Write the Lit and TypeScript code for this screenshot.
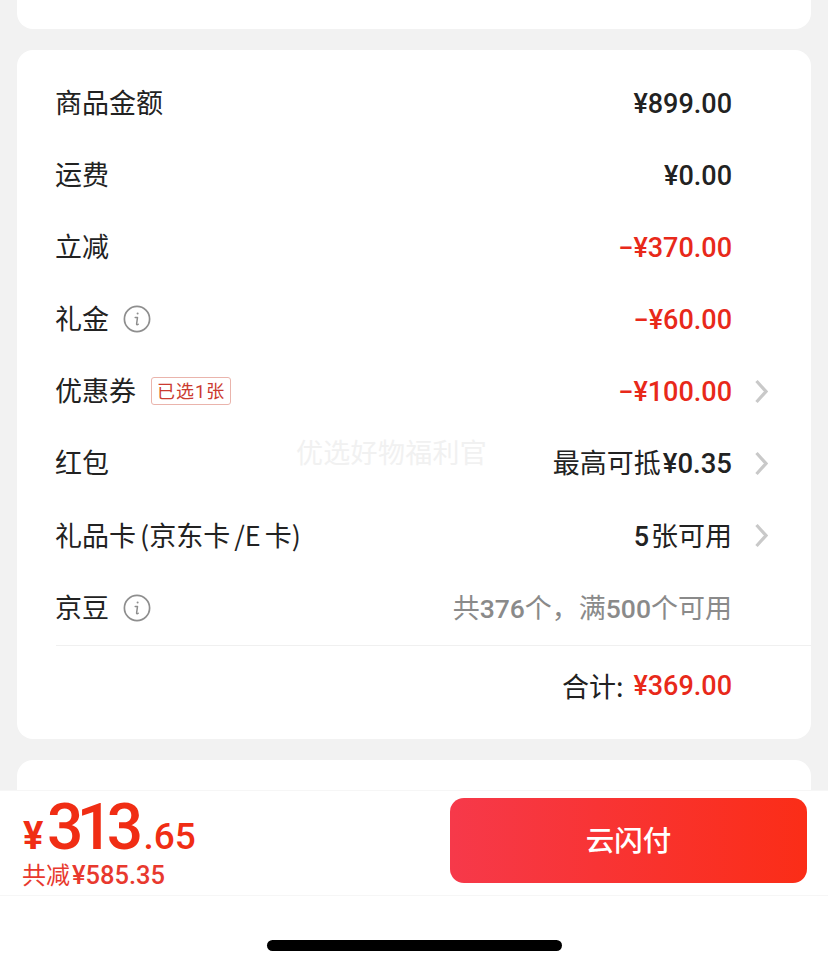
import { LitElement, html, css, nothing } from 'lit';
import { customElement } from 'lit/decorators.js';

type Row = {
  label: string;
  value: string;
  tone?: 'red' | 'gray';
  gap?: 'gap-before' | 'gap-after';
  info?: boolean;
  tag?: string;
  arrow?: boolean;
};

const rows: Row[] = [
  { label: '商品金额', value: '¥899.00' },
  { label: '运费', value: '¥0.00' },
  { label: '立减', value: '−¥370.00', tone: 'red' },
  { label: '礼金', value: '−¥60.00', tone: 'red', info: true },
  { label: '优惠券', value: '−¥100.00', tone: 'red', tag: '已选1张', arrow: true },
  { label: '红包', value: '最高可抵¥0.35', gap: 'gap-before', arrow: true },
  { label: '礼品卡 (京东卡 /E 卡)', value: '5张可用', gap: 'gap-after', arrow: true },
  { label: '京豆', value: '共376个，满500个可用', tone: 'gray', info: true },
];

const infoIcon = html`
  <svg class="info" viewBox="0 0 28 28" fill="none" stroke="#8e8e8e">
    <circle cx="14" cy="14" r="12.6" stroke-width="1.7"></circle>
    <path d="M12.2 12.4h2.3l-.9 6.6c-.1.9.8 1 1.6.2" stroke-width="1.5" stroke-linecap="round" stroke-linejoin="round"></path>
    <circle cx="14.6" cy="8.6" r="1" fill="#8e8e8e" stroke="none"></circle>
  </svg>
`;

const chevron = html`
  <svg class="chevron" viewBox="0 0 13 24" fill="none" stroke="#c9c9c9" stroke-width="3.2">
    <path d="M1.5 1.5 11 12 1.5 22.5" stroke-linejoin="miter"></path>
  </svg>
`;

// digits sit in a heavier latin face than the CJK around them
const mixed = (text: string) =>
  text.split(/([−¥0-9.]+)/).map((part, i) => (i % 2 ? html`<span class="num">${part}</span>` : part));

@customElement('app-root')
export class AppRoot extends LitElement {
  static styles = css`
    :host {
      display: block;
      width: 828px;
      height: 968px;
      overflow: hidden;
      position: relative;
      background: #f2f2f2;
      color: #222;
      font-family: 'Noto Sans CJK SC', sans-serif;
    }

    .num {
      font-family: 'Roboto', 'Noto Sans CJK SC', sans-serif;
      font-weight: 500;
    }

    .scroll {
      display: flex;
      flex-direction: column;
      gap: 21px;
      padding: 0 17px;
      height: 790px;
      overflow: hidden;
      box-sizing: border-box;
    }

    .card {
      background: #fff;
      border-radius: 16px;
      flex-shrink: 0;
    }

    .card.top {
      height: 29px;
      border-radius: 0 0 16px 16px;
    }

    .card.summary {
      height: 689px;
      padding-top: 16.95px;
      box-sizing: border-box;
    }

    .card.next {
      height: 60px;
    }

    .row {
      display: flex;
      align-items: center;
      height: 72.1px;
      padding-left: 38px;
      padding-right: 43px;
    }

    .label {
      font-size: 27px;
      line-height: 36px;
      padding-bottom: 2px;
      word-spacing: -2px;
      white-space: nowrap;
    }

    .info {
      width: 28px;
      height: 28px;
      margin-left: 14px;
    }

    .tag {
      font-size: 18px;
      line-height: 24px;
      letter-spacing: 1px;
      color: #cb3a30;
      border: 1px solid #eab4ac;
      border-radius: 3px;
      padding: 0 5px;
      margin-left: 15px;
      white-space: nowrap;
    }

    .tag .num {
      font-weight: 400;
    }

    .value {
      margin-left: auto;
      font-size: 27px;
      line-height: 36px;
      white-space: nowrap;
    }

    .value.red {
      color: #e8291a;
    }

    .value.gray {
      color: #8a8a8a;
    }

    .value.gray .num {
      font-size: 26.5px;
    }

    .value.gap-before .num {
      font-size: 27.5px;
      margin-left: 2px;
    }

    .value.gap-after .num {
      margin-right: 2px;
    }

    .slot {
      width: 13px;
      height: 27px;
      margin-left: 23px;
      flex-shrink: 0;
    }

    .chevron {
      display: block;
      width: 13px;
      height: 27px;
    }

    .total {
      display: flex;
      justify-content: flex-end;
      align-items: center;
      margin-top: 1px;
      margin-left: 39px;
      height: 80px;
      padding-right: 79px;
      border-top: 1px solid #f0f0f0;
      white-space: nowrap;
    }

    .total .cn {
      font-size: 27px;
      margin-right: 10px;
    }

    .total .num {
      font-size: 27px;
      color: #e8291a;
    }

    .watermark {
      position: absolute;
      left: 296px;
      top: 434px;
      font-size: 27px;
      line-height: 36px;
      letter-spacing: 0.3px;
      color: #f1f1f1;
      white-space: nowrap;
    }

    .footer {
      display: flex;
      align-items: center;
      justify-content: space-between;
      box-sizing: border-box;
      height: 106px;
      padding: 0 21px 4px 23px;
      background: #fff;
      border-top: 1px solid #f6f6f6;
      border-bottom: 1px solid #f6f6f6;
    }

    .now {
      display: flex;
      align-items: baseline;
      box-sizing: border-box;
      height: 68px;
      padding-top: 7px;
      line-height: 58px;
      color: #f02d14;
      font-family: 'Roboto', sans-serif;
      font-weight: 500;
    }

    .now .yen {
      font-size: 38px;
      font-weight: 700;
      margin-right: 3.5px;
    }

    .now .int {
      font-size: 64px;
      letter-spacing: -6.5px;
    }

    .now .dec {
      font-size: 37px;
      margin-left: 7px;
    }

    .saved {
      font-size: 24px;
      line-height: 30px;
      margin-top: -1px;
      margin-left: -1px;
      color: #e8392e;
      white-space: nowrap;
    }

    .saved .num {
      font-size: 25.5px;
      margin-left: 2px;
    }

    .pay {
      width: 357px;
      height: 85px;
      margin-bottom: 2px;
      border: none;
      border-radius: 14px;
      background: linear-gradient(90deg, #f6394a, #fb2d17);
      color: #fff;
      font-family: inherit;
      font-size: 28.5px;
      font-weight: 500;
      padding: 0 0 3px;
    }

    .home {
      display: flex;
      justify-content: center;
      background: #fff;
      height: 72px;
      padding-top: 44px;
      box-sizing: border-box;
    }

    .home span {
      display: block;
      width: 295px;
      height: 11px;
      border-radius: 6px;
      background: #000;
    }
  `;

  private renderRow(row: Row) {
    return html`
      <div class="row">
        <span class="label">${row.label}</span>
        ${row.info ? infoIcon : nothing}
        ${row.tag ? html`<span class="tag">${mixed(row.tag)}</span>` : nothing}
        <span class="value ${row.tone ?? ''} ${row.gap ?? ''}">${mixed(row.value)}</span>
        <span class="slot">${row.arrow ? chevron : nothing}</span>
      </div>
    `;
  }

  render() {
    return html`
      <div class="scroll">
        <div class="card top"></div>
        <div class="card summary">
          ${rows.map((row) => this.renderRow(row))}
          <div class="total">
            <span class="cn">合计:</span>
            <span class="num">¥369.00</span>
          </div>
        </div>
        <div class="card next"></div>
      </div>
      <div class="watermark">优选好物福利官</div>
      <div class="footer">
        <div>
          <div class="now">
            <span class="yen">¥</span><span class="int">313</span><span class="dec">.65</span>
          </div>
          <div class="saved">${mixed('共减¥585.35')}</div>
        </div>
        <button class="pay">云闪付</button>
      </div>
      <div class="home"><span></span></div>
    `;
  }
}

declare global {
  interface HTMLElementTagNameMap {
    'app-root': AppRoot;
  }
}
